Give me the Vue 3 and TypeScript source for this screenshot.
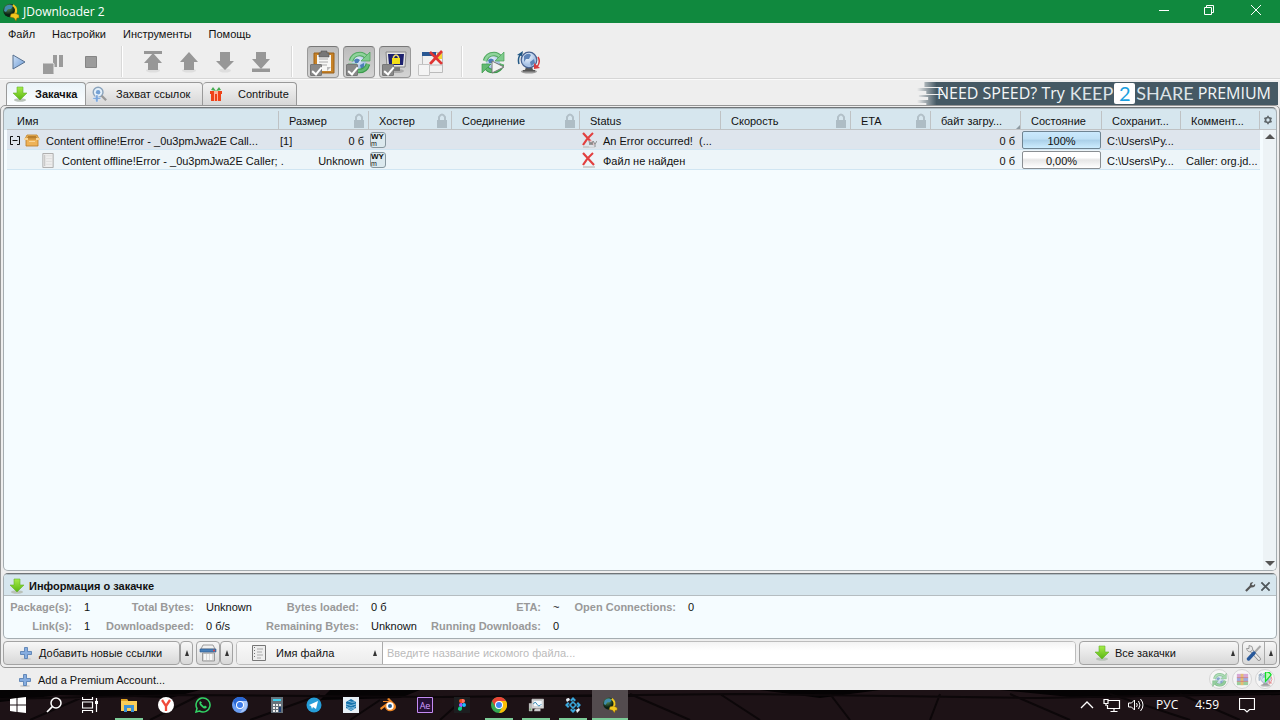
<script setup lang="ts">
import { ref } from 'vue'

interface Column { key: string; title: string; locked?: boolean; sorted?: boolean }
interface Tool { id: string; label: string }

const menus = ['Файл', 'Настройки', 'Инструменты', 'Помощь']

const playback: Tool[] = [
  { id: 'play', label: 'Старт' },
  { id: 'pause', label: 'Пауза' },
  { id: 'stop', label: 'Стоп' },
]
const moves: Tool[] = [
  { id: 'top', label: 'В начало' },
  { id: 'up', label: 'Выше' },
  { id: 'down', label: 'Ниже' },
  { id: 'bottom', label: 'В конец' },
]
const toggles = ref([
  { id: 'clipboard', label: 'Буфер обмена', on: true },
  { id: 'reconnect', label: 'Переподключение', on: true },
  { id: 'premium', label: 'Премиум', on: true },
  { id: 'window-x', label: 'Тихий режим', on: false },
])
const actions: Tool[] = [
  { id: 'reconnect-play', label: 'Переподключить' },
  { id: 'update', label: 'Обновить' },
]
const tabs = [
  { id: 'green-arrow', title: 'Закачка' },
  { id: 'linkgrabber', title: 'Захват ссылок' },
  { id: 'gift', title: 'Contribute' },
]
const activeTab = ref(0)

const columns: Column[] = [
  { key: 'name', title: 'Имя' },
  { key: 'size', title: 'Размер', locked: true },
  { key: 'host', title: 'Хостер', locked: true },
  { key: 'conn', title: 'Соединение', locked: true },
  { key: 'status', title: 'Status' },
  { key: 'speed', title: 'Скорость', locked: true },
  { key: 'eta', title: 'ETA', locked: true },
  { key: 'bytes', title: 'байт загру...', sorted: true },
  { key: 'state', title: 'Состояние' },
  { key: 'saved', title: 'Сохранит...' },
  { key: 'comment', title: 'Коммент...' },
]
const rows = [
  { pack: true, name: 'Content offline!Error - _0u3pmJwa2E Call...', count: '[1]', size: '0 б', icon: 'error-wy', status: 'An Error occurred!  (...', bytes: '0 б', percent: 100, state: '100%', saved: 'C:\\Users\\Ру...', comment: '' },
  { pack: false, name: 'Content offline!Error - _0u3pmJwa2E Caller; .', count: '', size: 'Unknown', icon: 'error', status: 'Файл не найден', bytes: '0 б', percent: 0, state: '0,00%', saved: 'C:\\Users\\Ру...', comment: 'Caller: org.jd...' },
]
const stats = [
  [['Package(s):', '1'], ['Total Bytes:', 'Unknown'], ['Bytes loaded:', '0 б'], ['ETA:', '~'], ['Open Connections:', '0']],
  [['Link(s):', '1'], ['Downloadspeed:', '0 б/s'], ['Remaining Bytes:', 'Unknown'], ['Running Downloads:', '0']],
]
const query = ref('')
const apps = [
  { id: 'explorer', label: 'Проводник', open: true },
  { id: 'yandex', label: 'Yandex' },
  { id: 'whatsapp', label: 'WhatsApp' },
  { id: 'chromium', label: 'Chromium' },
  { id: 'calc', label: 'Калькулятор' },
  { id: 'telegram', label: 'Telegram' },
  { id: 'sketchup', label: 'SketchUp' },
  { id: 'blender', label: 'Blender' },
  { id: 'ae', label: 'After Effects' },
  { id: 'figma', label: 'Figma' },
  { id: 'chrome', label: 'Chrome', open: true },
  { id: 'monitor', label: 'Монитор', open: true },
  { id: 'kodi', label: 'Сервис', open: true },
  { id: 'jd', label: 'JDownloader', open: true, active: true },
]
</script>

<template>
  <div class="desktop">
    <svg class="defs" aria-hidden="true">
      <defs>
        <linearGradient id="g-green" x2="0" y2="1"><stop stop-color="#a6ec4a" /><stop offset="1" stop-color="#58b512" /></linearGradient>
        <linearGradient id="g-blue" x2="1" y2="1"><stop stop-color="#cfe1f7" /><stop offset="1" stop-color="#6a99d4" /></linearGradient>
        <radialGradient id="g-globe" cx=".4" cy=".3"><stop stop-color="#f4f9ff" /><stop offset="1" stop-color="#a9c3e6" /></radialGradient>
        <radialGradient id="g-jd" cx=".35" cy=".3"><stop stop-color="#5d9c5f" /><stop offset="1" stop-color="#0b2114" /></radialGradient>
      </defs>
      <symbol id="jd" viewBox="0 0 18 18">
        <circle cx="8" cy="7.5" r="6.8" fill="url(#g-jd)" />
        <path d="M3 4q4-4 8-1l-2 3-3 0-2 3-2-1z" fill="#3f8cab" />
        <path d="M11 2q5 4 2 9" fill="none" stroke="#f2c71d" stroke-width="2.200" />
        <path d="M9 11l4-1 4 2 0 3-2 0-1 3-2-3-4-1z" fill="#f2c71d" stroke="#805d08" stroke-width=".5" />
      </symbol>
      <symbol id="play" viewBox="0 0 24 24"><path d="M6 5v14l12-7z" fill="url(#g-blue)" stroke="#57708f" stroke-width="1" /></symbol>
      <symbol id="pause" viewBox="0 0 24 24" fill="#9b9b9b"><path d="M10 5h4v12h-4zM16 5h4v12h-4z" /><rect x="-1" y="13" width="12" height="12" rx="1.500" stroke="#eee" /></symbol>
      <symbol id="stop" viewBox="0 0 24 24"><path d="M6.500 6.500h11v11h-11z" fill="#9b9b9b" stroke="#858585" /></symbol>
      <symbol id="up" viewBox="0 0 24 24"><ellipse cx="12" cy="20.500" rx="7" ry="2" fill="#dedede" /><path d="M12 2l9 10h-4v8H7v-8H3z" fill="#979797" /></symbol>
      <symbol id="down" viewBox="0 0 24 24"><ellipse cx="12" cy="20.500" rx="6" ry="2" fill="#dedede" /><path d="M12 20l9-9h-4V2H7v9H3z" fill="#979797" /></symbol>
      <symbol id="top" viewBox="0 0 24 24"><ellipse cx="12" cy="20.500" rx="7" ry="2" fill="#dedede" /><path d="M3 1h18v3H3zM12 3l9 10h-4v7H7v-7H3z" fill="#979797" /></symbol>
      <symbol id="bottom" viewBox="0 0 24 24"><path d="M12 19l9-10h-4V2H7v7H3zM3 18.500h18v3.500H3z" fill="#979797" /></symbol>
      <symbol id="clipboard" viewBox="0 0 24 24">
        <path d="M3 3h20v20H3z" fill="#c78227" stroke="#99601a" /><path d="M6 5h14v16H6z" fill="#f7f7f5" />
        <path d="M8 9h9M8 12h9M8 15h8" stroke="#aaa" /><path d="M8 3h2V1h6v2h2v4H8z" fill="#777" stroke="#555" stroke-width=".6" /><path d="M16 21v-4h4z" fill="#bbb" />
      </symbol>
      <symbol id="reconnect" viewBox="0 0 24 24">
        <circle cx="12" cy="13" r="7" fill="url(#g-globe)" /><path d="M7 10q3-3 6 0l-2 3-3 0zM13 15l4-2 0 4-3 2z" fill="#4c7db9" />
        <path d="M4 11Q6 4 13 4q4 0 7 4" fill="none" stroke="#52a861" stroke-width="4.600" /><path d="M4 11Q6 4 13 4q4 0 7 4" fill="none" stroke="#8ed39b" stroke-width="2.600" />
        <path d="M23 2v9h-9z" fill="#7ecb8c" stroke="#4aa058" stroke-width=".7" />
        <path d="M21 14q-2 7-9 7-5 0-7-4" fill="none" stroke="#3c9a4c" stroke-width="4.600" /><path d="M21 14q-2 7-9 7-5 0-7-4" fill="none" stroke="#62ba72" stroke-width="2.600" />
        <path d="M1 23v-9h9z" fill="#62ba72" stroke="#3c9a4c" stroke-width=".7" />
      </symbol>
      <symbol id="reconnect-play" viewBox="0 0 24 24"><use href="#reconnect" width="24" height="24" /><path d="M11 11v12l12-6z" fill="#f2f2f2" stroke="#777" /></symbol>
      <symbol id="premium" viewBox="0 0 24 24">
        <ellipse cx="14" cy="21" rx="7" ry="2" fill="#aaa" /><path d="M10 17h7v4h-7z" fill="#777" /><path d="M3 2h20l-1 15H4z" fill="#e4e4e4" stroke="#888" /><path d="M5 4h16l-1 11H6z" fill="#1d216e" />
        <path d="M10.500 9V7q2.500-4 5 0v2" fill="none" stroke="#ead96a" stroke-width="1.500" /><rect x="9" y="8" width="8" height="6" fill="#f4df1a" />
      </symbol>
      <symbol id="window-x" viewBox="0 0 24 24">
        <path d="M3.500 2.500h20v20h-20z" fill="#f1f1f1" stroke="#bbb" /><path d="M3 2h14v4H3z" fill="#2a5893" /><path d="M18 3h5v6h-4z" fill="#f4d435" />
        <path d="M11 2l12 12M23 1L11 14" stroke="#e03533" stroke-width="2.600" /><path d="M4 15h19" stroke="#bbb" />
      </symbol>
      <symbol id="update" viewBox="0 0 24 24">
        <ellipse cx="12" cy="21.500" rx="8" ry="2" fill="#999" /><path d="M9 17h6l1 3h2v1.500H6V20h2z" fill="#555" />
        <circle cx="12" cy="10" r="7.800" fill="url(#g-globe)" stroke="#47618f" stroke-width="1.200" />
        <path d="M7 6q4-4 7-1l-2 4-3 0-2 3zM13 12l4-3 1 4-4 3z" fill="#5d84b8" />
        <path d="M5 3Q0 7 2 14" fill="none" stroke="#225885" stroke-width="1.500" /><path d="M0 5l6-4-1 5z" fill="#225885" />
        <path d="M21 7q3 5-1 10" fill="none" stroke="#d83c40" stroke-width="1.500" /><path d="M17 13v6l6-1z" fill="#d83c40" />
      </symbol>
      <symbol id="green-arrow" viewBox="0 0 16 16"><ellipse cx="8" cy="14" rx="6" ry="1.700" fill="#b9c2b9" /><path d="M5 1h6v6h4l-7 7-7-7h4z" fill="url(#g-green)" stroke="#63b32b" stroke-width=".6" /></symbol>
      <symbol id="linkgrabber" viewBox="0 0 18 18">
        <circle cx="8" cy="7" r="5.500" fill="#e4f0fa" stroke="#8ba4bd" stroke-width="1.600" /><circle cx="8" cy="7" r="2.500" fill="#75a1d4" />
        <path d="M12 11l5 5" stroke="#999" stroke-width="2.600" /><path d="M5 10h3v3h3v2H8v3H5v-3H2v-2h3z" fill="#7aa6dd" stroke="#fff" stroke-width=".5" />
      </symbol>
      <symbol id="gift" viewBox="0 0 16 16"><path d="M2 5h12v3H2zM3 8h10v7H3z" fill="#ee4218" /><path d="M6 5h4v10H6z" fill="#ffb09a" /><path d="M7 8h2v7H7z" fill="#ee4218" /><path d="M8 5L3 4l2-3zM8 5l5-1-2-3z" fill="#45aa50" /></symbol>
      <symbol id="lock" viewBox="0 0 12 16"><path d="M3 7V4q3-5 6 0v3" fill="none" stroke="#b2c0c8" stroke-width="2" /><path d="M1 7h10v8H1z" fill="#aebdc5" /></symbol>
      <symbol id="gear" viewBox="0 0 12 12"><circle cx="6" cy="6" r="3" fill="none" stroke="#5f676b" stroke-width="2" /><path d="M6 1v2M6 9v2M1.700 3.500l1.700 1M8.600 7.500l1.700 1M1.700 8.500l1.700-1M8.600 4.500l1.700-1" stroke="#5f676b" stroke-width="2" /></symbol>
      <symbol id="box" viewBox="0 0 16 14"><path d="M3 1h10l2 4H1z" fill="#f0ba61" stroke="#bd7d24" stroke-width=".8" /><path d="M4 2h8l1 2H3z" fill="#b97f2c" /><path d="M2 5h12v7H2z" fill="#eeb258" stroke="#b97a24" stroke-width=".8" /><path d="M0 4h4v2H0zM12 4h4v2h-4zM5 7h6v1H5z" fill="#f8d599" /></symbol>
      <symbol id="page" viewBox="0 0 14 16"><path d="M1.500.5h11v15h-11z" fill="#eee" stroke="#aaa" /><path d="M3.500 2v12" stroke="#bbb" /><path d="M5 3h6M5 6h6M5 9h6M5 12h6" stroke="#ddd" /></symbol>
      <symbol id="page-dark" viewBox="0 0 14 16"><path d="M.5.5h13v15H.5z" fill="#eee" stroke="#777" /><path d="M2.500 2v12" stroke="#777" stroke-dasharray="1 2" /><path d="M5 4h6M5 7h5M5 10h6M5 13h4" stroke="#aaa" /></symbol>
      <symbol id="error" viewBox="0 0 16 16"><path d="M2 15h12" stroke="#c3c3c3" stroke-width="1.500" /><path d="M2 1l11 12M12 1Q6 6 2 13" fill="none" stroke="#e24040" stroke-width="2.200" /></symbol>
      <symbol id="error-wy" viewBox="0 0 16 16"><use href="#error" width="16" height="16" /><rect x="8" y="8.500" width="8" height="7" rx="1" fill="#dde4ea" opacity=".8" /><path d="M8 9l1 4 1-3 1 3 1-4M12 9l2 3 2-3M14 12v3" fill="none" stroke="#777" stroke-width=".8" /></symbol>
      <symbol id="plus" viewBox="0 0 14 14"><ellipse cx="7" cy="13" rx="5" ry="1" fill="#ccc" /><path d="M5.500 1.500h3v4h4v3h-4v4h-3v-4h-4v-3h4z" fill="#86ade0" stroke="#4f78ae" stroke-width=".8" /></symbol>
      <symbol id="tray" viewBox="0 0 18 18"><path d="M3.500 9h12v8h-12z" fill="#d9d9d9" stroke="#999" /><path d="M4 1h10l2 4H2z" fill="#f1f1f1" stroke="#888" stroke-width=".8" /><path d="M1 5h16v3H1z" fill="#477fb9" stroke="#28568b" stroke-width=".6" /><path d="M6 10v6M9 10v6M12 10v6" stroke="#fff" stroke-width="1.500" /><circle cx="15" cy="6.500" r="1" fill="#e34242" /></symbol>
      <symbol id="tri" viewBox="0 0 6 6"><path d="M3 0l2 6H1z" fill="#333" /></symbol>
      <symbol id="wrench" viewBox="0 0 12 12"><path d="M1 11l6-6" stroke="#555" stroke-width="2.400" /><path d="M11 3q1 4-4 4-3-1-1-5l3-1-2 3 2 1z" fill="#555" /></symbol>
      <symbol id="close" viewBox="0 0 12 12"><path d="M1.500 1.500l9 9M10.500 1.500l-9 9" stroke="#4f575b" stroke-width="2" /></symbol>
      <symbol id="tools" viewBox="0 0 16 16"><path d="M4 4l9 10" stroke="#8c8c8c" stroke-width="3.600" stroke-linecap="round" /><path d="M4 4l9 10" stroke="#ececec" stroke-width="2" stroke-linecap="round" /><path d="M3 .5l0 3-2.500 0q1 4 4.500 3 3-2 1-5z" fill="#e8e8e8" stroke="#8c8c8c" stroke-width=".8" /><path d="M14.500 1L8 8" stroke="#aaa" stroke-width="2" /><path d="M8 8l-5.500 6" stroke="#28599b" stroke-width="3.400" stroke-linecap="round" /></symbol>
      <symbol id="rar" viewBox="0 0 16 16"><path d="M2 2h12v4H2z" fill="#c77fc6" /><path d="M2 6h12v4H2z" fill="#7186d8" /><path d="M2 10h12v4H2z" fill="#6fb970" /><path d="M6 2h3v12H6z" fill="#dda02f" /><path d="M2 6h12M2 10h12" stroke="#b33" stroke-width=".8" /></symbol>
      <symbol id="update-v" viewBox="0 0 16 16"><g opacity=".55"><use href="#update" width="16" height="16" /></g><path d="M8 0q4-1 6 3L8 10z" fill="#b9fbb4" stroke="#12dd27" stroke-width="1.300" /></symbol>
      <symbol id="win" viewBox="0 0 16 16"><path d="M0 2l6.500-1v6.500H0zM7.500.9L16 0v7.500H7.500zM0 8.500h6.500V15L0 14zM7.500 8.500H16V16l-8.500-1z" fill="#fff" /></symbol>
      <symbol id="search" viewBox="0 0 16 16"><circle cx="10" cy="6" r="5" fill="none" stroke="#fff" stroke-width="1.500" /><path d="M6.300 9.700L1 15" stroke="#fff" stroke-width="1.700" /></symbol>
      <symbol id="taskview" viewBox="0 0 16 16"><path d="M.5 0v2.500h10V0M.5 16v-2.500h10V16M.5 5h10v6H.5zM14.500 1v14" fill="none" stroke="#fff" stroke-width="1.200" /><path d="M13 4h3v3h-3z" fill="#fff" /></symbol>
      <symbol id="explorer" viewBox="0 0 16 16"><path d="M0 2h6l1 2h9v10H0z" fill="#f9ce58" /><path d="M0 2h6l1 2H0z" fill="#dda020" /><path d="M3 15V8h10v7h-3v-4H6v4z" fill="#3c92d5" /></symbol>
      <symbol id="yandex" viewBox="0 0 16 16"><circle cx="8" cy="8" r="8" fill="#fff" /><path d="M4 3l4 6v5M12 3L8 9" fill="none" stroke="#f04a3b" stroke-width="2.300" /></symbol>
      <symbol id="whatsapp" viewBox="0 0 16 16"><path d="M1 15l1-3.500A7 7 0 1 1 4.500 14z" fill="none" stroke="#32d466" stroke-width="1.500" /><path d="M5 4q-2 3 2 6 3 3 5 0l-2-1.500-1 1-3-3 1-1z" fill="#32d466" /></symbol>
      <symbol id="chromium" viewBox="0 0 16 16"><circle cx="8" cy="8" r="8" fill="#6a9df2" /><path d="M8 4h7a8 8 0 0 0-14 0l3 6z" fill="#2966d3" /><path d="M15 4H8l4 6-4 6q9-2 7-12z" fill="#a5c4f8" /><circle cx="8" cy="8" r="4" fill="#fff" /><circle cx="8" cy="8" r="3" fill="#3c7bea" /></symbol>
      <symbol id="calc" viewBox="0 0 16 16"><path d="M2 0h12v16H2z" fill="#66717a" /><path d="M4 2h8v2H4z" fill="#3ed0ee" /><path d="M4 7h2v2H4zM7 7h2v2H7zM10 7h2v2h-2zM4 10h2v2H4zM7 10h2v2H7zM4 13h2v2H4zM7 13h2v2H7z" fill="#eee" /><path d="M10 10h2v5h-2z" fill="#1d3e75" /></symbol>
      <symbol id="telegram" viewBox="0 0 16 16"><circle cx="8" cy="8" r="7.500" fill="#269dd8" /><path d="M3 8l9-4-2 8-3-2-1 2-1-3z" fill="#fff" /></symbol>
      <symbol id="sketchup" viewBox="0 0 16 16"><path d="M0 0h16v16H0z" fill="#e7f0f6" /><path d="M3 5l5-3 5 3v6l-5 3-5-3z" fill="#1674ae" /><path d="M3 7q5 3 10 0M3 9q5 4 10 0M4 11q4 3 8 0M5 4q4 2 7 1" fill="none" stroke="#8ec5e3" stroke-width=".9" /></symbol>
      <symbol id="blender" viewBox="0 0 16 16"><path d="M0 11l8-6H3V4h6L7 2l2-1 6 6q3 5-3 7-6 1-7-4l-4 3z" fill="#ed8625" /><circle cx="10" cy="9" r="3.700" fill="#fff" /><circle cx="10" cy="9" r="2" fill="#245b91" /></symbol>
      <symbol id="ae" viewBox="0 0 16 16"><path d="M.5.5h15v15H.5z" fill="#251036" stroke="#c58bf3" /><text x="8" y="11.500" text-anchor="middle" font-family="Open Sans, sans-serif" font-size="9" fill="#d39eff">Ae</text></symbol>
      <symbol id="figma" viewBox="0 0 16 16"><path d="M0 0h16v16H0z" fill="#1d1e20" /><path d="M8 2H7a2 2 0 0 0 0 4h1z" fill="#f24e1e" /><path d="M8 2h1a2 2 0 0 1 0 4H8z" fill="#ff7262" /><path d="M8 6H7a2 2 0 0 0 0 4h1z" fill="#a259ff" /><circle cx="10" cy="8" r="2" fill="#1abcfe" /><path d="M8 10H7a2 2 0 1 0 1 2z" fill="#0acf83" /></symbol>
      <symbol id="chrome" viewBox="0 0 16 16"><circle cx="8" cy="8" r="8" fill="#35a853" /><path d="M8 4h7a8 8 0 0 0-14 0l3.500 6z" fill="#e94435" /><path d="M15 4H8l3.500 6L8 16A8 8 0 0 0 15 4z" fill="#fbbd05" /><circle cx="8" cy="8" r="4" fill="#fff" /><circle cx="8" cy="8" r="3" fill="#4285f4" /></symbol>
      <symbol id="monitor" viewBox="0 0 18 16"><path d="M1 6h4v9H1z" fill="#bbb" /><path d="M2 12h1v2H2z" fill="#3ac240" /><path d="M4.500 1.500h13v10h-13z" fill="#eee" stroke="#bbb" /><path d="M6 3h10v7H6z" fill="#f4fbff" stroke="#999" stroke-width=".5" /><path d="M6 7q2-4 4 0t5 0" fill="none" stroke="#2a7fac" /><path d="M9 12h5v3H7v-2z" fill="#ccc" /></symbol>
      <symbol id="kodi" viewBox="0 0 16 16"><path d="M8 0l3 3-1.500 1.500L8 3 6.500 4.500 5 3zM16 8l-3 3-1.500-1.500L13 8l-1.500-1.500L13 5zM8 16l-3-3 1.500-1.500L8 13l1.500-1.500L11 13zM0 8l3-3 1.500 1.500L3 8l1.500 1.500L3 11z" fill="#3aa6da" /><path d="M8 5l3 3-3 3-3-3z" fill="none" stroke="#3aa6da" stroke-width="1.600" /><path d="M1 3q0-2 3-2l1 2-3 2zM11 13l3-2 1 2-3 3z" fill="#e7eef5" /></symbol>
      <symbol id="chevron" viewBox="0 0 14 14"><path d="M1 10l6-6 6 6" fill="none" stroke="#fff" stroke-width="1.300" /></symbol>
      <symbol id="network" viewBox="0 0 17 14"><path d="M5 2.500h11v8H4V7M.5 1.500h4v4h-4zM2.500 5v3M7 13.500h7M10.500 10v3" fill="none" stroke="#fff" stroke-width="1.200" /></symbol>
      <symbol id="sound" viewBox="0 0 17 14"><path d="M1 5h3l3-3v10L4 9H1z" fill="none" stroke="#fff" /><path d="M9 5q1.500 2 0 4M11 3q3 4 0 8M13 1q5 6 0 12" fill="none" stroke="#fff" /></symbol>
      <symbol id="notice" viewBox="0 0 16 16"><path d="M.5 1.500h15v11h-5l-2.500 2.500-2.500-2.500h-5z" fill="none" stroke="#fff" stroke-width="1.200" /></symbol>
    </svg>

    <header class="titlebar">
      <svg class="i18"><use href="#jd" /></svg>
      <h1>JDownloader 2</h1>
      <div class="winbtns">
        <button type="button" aria-label="Свернуть"><svg viewBox="0 0 12 12"><path d="M1 6.500h10" /></svg></button>
        <button type="button" aria-label="Развернуть"><svg viewBox="0 0 12 12"><path d="M1.500 3.500h7v7h-7zM3.500 3V1.500h7v7H9" /></svg></button>
        <button type="button" aria-label="Закрыть"><svg viewBox="0 0 12 12"><path d="M1 1l10 10M11 1L1 11" /></svg></button>
      </div>
    </header>

    <nav class="menu"><button v-for="m in menus" :key="m" type="button">{{ m }}</button></nav>

    <div class="toolbar">
      <button v-for="t in playback" :key="t.id" type="button" class="tool" :aria-label="t.label"><svg class="i24"><use :href="'#' + t.id" /></svg></button>
      <span class="sep" />
      <button v-for="t in moves" :key="t.id" type="button" class="tool" :aria-label="t.label"><svg class="i24"><use :href="'#' + t.id" /></svg></button>
      <span class="sep" />
      <label v-for="t in toggles" :key="t.id" class="tool toggle" :class="{ on: t.on }">
        <svg class="i24"><use :href="'#' + t.id" /></svg>
        <input v-model="t.on" type="checkbox" :aria-label="t.label">
      </label>
      <span class="sep" />
      <button v-for="t in actions" :key="t.id" type="button" class="tool" :aria-label="t.label"><svg class="i24"><use :href="'#' + t.id" /></svg></button>
    </div>

    <div class="tabrow">
      <div class="tabs" role="tablist">
        <button v-for="(t, i) in tabs" :key="t.id" type="button" role="tab" class="tab" :class="{ active: i === activeTab }" :aria-selected="i === activeTab" @click="activeTab = i">
          <svg class="i16"><use :href="'#' + t.id" /></svg><span>{{ t.title }}</span>
        </button>
      </div>
      <a class="banner" href="#premium">
        <svg class="streaks" viewBox="0 0 28 23" preserveAspectRatio="none" aria-hidden="true">
          <defs><linearGradient id="fade"><stop stop-color="#455964" stop-opacity="0" /><stop offset=".75" stop-color="#455964" /></linearGradient></defs>
          <path d="M8 0h20v5H8zM0 6h28v3H0zM10 8h18v4H10zM2 13h26v2H2zM12 15h16v3H12zM0 18h28v3H0zM10 21h18v2H10z" fill="url(#fade)" />
        </svg>
        <span class="pitch">NEED SPEED? Try</span><span class="brand">KEEP</span><span class="two">2</span><span class="brand">SHARE</span><span class="prem">PREMIUM</span>
      </a>
    </div>

    <main class="frame">
      <section class="panel list">
        <table>
          <colgroup><col v-for="c in columns" :key="c.key" :class="'c-' + c.key"></colgroup>
          <thead>
            <tr>
              <th v-for="c in columns" :key="c.key" scope="col">
                <div class="th"><span>{{ c.title }}</span><svg v-if="c.locked" class="lock"><use href="#lock" /></svg><i v-if="c.sorted" class="corner" /></div>
              </th>
            </tr>
          </thead>
          <tbody>
            <tr v-for="r in rows" :key="r.name" :class="{ pack: r.pack }">
              <td class="spill">
                <div class="cell name" :class="{ child: !r.pack }">
                  <button v-if="r.pack" type="button" class="fold" aria-label="Свернуть пакет"><svg viewBox="0 0 10 9"><path d="M3 .5H.5v8H3M7 .5h2.500v8H7M2.500 4.500h5" /></svg></button>
                  <svg :class="r.pack ? 'box' : 'page'"><use :href="r.pack ? '#box' : '#page'" /></svg><span>{{ r.name }}</span>
                </div>
              </td>
              <td class="spill"><div class="cell size"><span>{{ r.count }}</span><span>{{ r.size }}</span></div></td>
              <td><div class="cell host"><span class="wy"><b>WY</b><small>m</small></span></div></td>
              <td />
              <td><div class="cell status"><svg class="i16"><use :href="'#' + r.icon" /></svg><span>{{ r.status }}</span></div></td>
              <td /><td />
              <td><div class="cell bytes">{{ r.bytes }}</div></td>
              <td><div class="progress" :class="{ full: r.percent === 100 }" role="progressbar" :aria-valuenow="r.percent">{{ r.state }}</div></td>
              <td><div class="cell text">{{ r.saved }}</div></td>
              <td><div class="cell text">{{ r.comment }}</div></td>
            </tr>
          </tbody>
        </table>
        <div class="side">
          <button type="button" class="cfg" aria-label="Настроить столбцы"><svg><use href="#gear" /></svg></button>
          <div class="scroll">
            <button type="button" aria-label="Вверх"><i class="arr-up" /></button>
            <button type="button" aria-label="Вниз"><i class="arr-down" /></button>
          </div>
        </div>
      </section>

      <section class="panel info">
        <header>
          <svg class="i16"><use href="#green-arrow" /></svg><h2>Информация о закачке</h2>
          <button type="button" aria-label="Настроить"><svg><use href="#wrench" /></svg></button>
          <button type="button" aria-label="Закрыть панель"><svg><use href="#close" /></svg></button>
        </header>
        <dl>
          <template v-for="(line, i) in stats" :key="i">
            <template v-for="s in line" :key="s[0]"><dt :class="{ first: s === line[0] }">{{ s[0] }}</dt><dd>{{ s[1] }}</dd></template>
          </template>
        </dl>
      </section>

      <div class="bottombar">
        <div class="split add">
          <button type="button" class="main"><svg class="i14"><use href="#plus" /></svg>Добавить новые ссылки</button>
          <button type="button" class="drop" aria-label="Ещё"><svg class="tri"><use href="#tri" /></svg></button>
        </div>
        <div class="split">
          <button type="button" class="sq" aria-label="Очистить"><svg class="i18"><use href="#tray" /></svg></button>
          <button type="button" class="drop" aria-label="Варианты очистки"><svg class="tri"><use href="#tri" /></svg></button>
        </div>
        <div class="search">
          <label class="pick field"><svg class="page-dark"><use href="#page-dark" /></svg><select aria-label="Поле поиска"><option>Имя файла</option></select><svg class="tri"><use href="#tri" /></svg></label>
          <input v-model="query" type="text" aria-label="Поиск" placeholder="Введите название искомого файла...">
        </div>
        <label class="pick filter"><svg class="i16"><use href="#green-arrow" /></svg><select aria-label="Фильтр закачек"><option>Все закачки</option></select><svg class="tri"><use href="#tri" /></svg></label>
        <div class="split joined">
          <button type="button" class="sq" aria-label="Инструменты"><svg class="i16"><use href="#tools" /></svg></button>
          <button type="button" class="drop" aria-label="Ещё инструменты"><svg class="tri"><use href="#tri" /></svg></button>
        </div>
      </div>
    </main>

    <footer class="statusbar">
      <button type="button" class="account"><svg class="i14"><use href="#plus" /></svg>Add a Premium Account...</button>
      <span class="round"><svg class="faded"><use href="#reconnect" /></svg></span>
      <span class="round"><svg class="faded"><use href="#rar" /></svg></span>
      <span class="round"><svg><use href="#update-v" /></svg></span>
    </footer>

    <nav class="taskbar">
      <svg class="wall" viewBox="0 0 1280 30" preserveAspectRatio="none" aria-hidden="true">
        <path d="M0 0h200l-30 8L60 5 0 12zM330 0h90l-20 8-80 2zM760 0h120l-60 8zM1000 0h280v5l-200 3z" fill="#050304" />
        <path d="M0 9l180-4 260 2 300-3 300 4 240-5M30 30L90 4M150 30l50-25M250 30l70-25M350 30l30-20M440 30l20-18M630 4l60 26M720 4l40 26M830 4l20 26M930 30l10-26M1010 4l60 26M1110 4l80 26M1180 4l60 26" fill="none" stroke="#0c0709" stroke-width="2" />
      </svg>
      <button type="button" class="sys" aria-label="Пуск"><svg class="i16"><use href="#win" /></svg></button>
      <button type="button" class="sys" aria-label="Поиск Windows"><svg class="i16"><use href="#search" /></svg></button>
      <button type="button" class="sys last" aria-label="Представление задач"><svg class="i16"><use href="#taskview" /></svg></button>
      <button v-for="a in apps" :key="a.id" type="button" class="app" :class="{ open: a.open, active: a.active }" :aria-label="a.label"><svg class="i16"><use :href="'#' + a.id" /></svg></button>
      <div class="systray">
        <svg class="i14"><use href="#chevron" /></svg>
        <svg class="i18w"><use href="#network" /></svg>
        <svg class="i18w"><use href="#sound" /></svg>
        <span class="lang">РУС</span><time>4:59</time>
        <svg class="notice"><use href="#notice" /></svg>
      </div>
    </nav>
  </div>
</template>

<style>
html, body { background: #eee; }
</style>

<style scoped>
.desktop { min-height: 100vh; display: flex; flex-direction: column; background: #eee; font: 11px/14px "Liberation Sans", Arial, sans-serif; color: #111; overflow: hidden; }
* { box-sizing: border-box; }
button, input, select { font: inherit; color: inherit; margin: 0; padding: 0; border: 0; background: none; }
svg { display: block; flex: none; overflow: visible; }
.defs { position: absolute; width: 0; height: 0; }
.i14 { width: 14px; height: 14px; } .i16 { width: 16px; height: 16px; } .i18 { width: 18px; height: 18px; } .i24 { width: 24px; height: 24px; } .i18w { width: 18px; height: 14px; }
.tri { width: 6px; height: 6px; }

.titlebar { height: 23px; background: #10893e; color: #fff; display: flex; align-items: center; padding-left: 2px; gap: 3px; }
.titlebar h1 { margin: 0; font: 12px/18px "Open Sans", sans-serif; }
.winbtns { margin-left: auto; display: flex; height: 20px; align-self: flex-start; }
.winbtns button { width: 46px; display: flex; align-items: center; justify-content: center; }
.winbtns button:nth-child(2) { width: 44px; }
.winbtns button:last-child { width: 49px; }
.winbtns svg { width: 12px; height: 12px; fill: none; stroke: #fff; }

.menu { height: 22px; display: flex; align-items: center; gap: 17px; padding-left: 8px; }
.toolbar { height: 34px; display: flex; align-items: center; gap: 4px; padding: 1px 3px; border-bottom: 1px solid #d6d6d6; box-shadow: 0 1px #fafafa; }
.tool { width: 32px; height: 32px; display: flex; align-items: center; justify-content: center; position: relative; border-radius: 4px; }
.sep { width: 2px; align-self: stretch; margin: 0 10px; background: #d9d9d9; border-right: 1px solid #fff; }
.toggle.on { background: linear-gradient(#bcbcbc, #d4d4d4); border: 1px solid #999; border-top-color: #777; }
.toggle input { appearance: none; position: absolute; left: 3px; bottom: 2px; width: 12px; height: 12px; border: 1px solid #c4c4c4; border-radius: 1px; background: #f4f4f4; }
.toggle.on input { background: #898989; border-color: #777; left: 2px; bottom: 1px; }
.toggle input:checked::after { content: ""; position: absolute; left: 3px; top: 0; width: 4px; height: 8px; border: solid #fff; border-width: 0 2px 2px 0; transform: rotate(40deg); }

.tabrow { height: 26px; display: flex; justify-content: space-between; padding: 3px 2px 0 6px; }
.tabs { display: flex; }
.tab { width: 94px; display: flex; align-items: center; gap: 14px; padding-left: 5px; border: 1px solid #999; border-left-width: 0; border-bottom: 0; border-radius: 4px 4px 0 0; background: linear-gradient(#f3f3f3, #d7d7d7); }
.tab:first-child { width: 80px; gap: 7px; border-left-width: 1px; }
.tab:nth-child(2) { width: 117px; gap: 9px; }
.tab.active { font-weight: bold; background: linear-gradient(#eaf3f8, #fcfeff); }
.banner { display: flex; align-items: center; background: linear-gradient(90deg, transparent 26px, #455964 26px); color: #f4f7f8; text-decoration: none; font: 16px/23px "Open Sans", sans-serif; padding-right: 7px; position: relative; padding-left: 20px; }
.streaks { position: absolute; left: 0; top: 0; width: 26px; height: 100%; }
.pitch { position: relative; margin-right: 5px; }
.brand { font: 18px/23px Lato, sans-serif; color: #dde4e8; }
.two { background: #fff; color: #1a9fe0; font: 20px/21px Lato, sans-serif; width: 21px; text-align: center; border-radius: 2px; margin: 0 1px; }
.prem { margin-left: 4px; }

.frame { flex: 1; display: flex; flex-direction: column; border: 1px solid #969696; border-radius: 5px; padding: 1px 2px 2px; gap: 2px; }
.panel { border: 1px solid #a5adb1; border-top-color: #6f7477; border-radius: 5px; background: #f5fcff; overflow: hidden; }
.list { flex: 1; display: flex; align-items: stretch; background: linear-gradient(#d6e6ee 22px, #f5fcff 22px); box-shadow: inset 0 1px #b1bec5; }
table { flex: 1; width: 0; table-layout: fixed; border-collapse: separate; border-spacing: 0; align-self: flex-start; padding-left: 3px; }
.c-size { width: 90px; } .c-host { width: 83px; } .c-conn { width: 128px; } .c-status { width: 141px; } .c-speed { width: 130px; } .c-eta { width: 80px; } .c-bytes { width: 90px; } .c-state { width: 81px; } .c-saved { width: 79px; } .c-comment { width: 79px; }
th, td { padding: 0; font-weight: normal; text-align: left; overflow: hidden; white-space: pre; }
th { height: 22px; padding-top: 3px; border-bottom: 1px solid #bfc2c4; }
.th { height: 18px; border-right: 1px solid #bfc2c4; padding: 1px 3px 0 10px; display: flex; justify-content: space-between; align-items: center; position: relative; }
.lock { width: 12px; height: 16px; }
.corner { position: absolute; right: 0; bottom: 0; border: solid transparent; border-width: 4px 0 0 4px; border-right: 0; border-bottom: 4px solid #8f9ba2; border-top: 0; }
td { height: 20px; border-bottom: 1px solid #d0e5f2; background: #edf5f9; }
td.spill { overflow: visible; }
td.spill span { position: relative; z-index: 1; }
.pack td { background: #dee5ed; }
.cell { display: flex; align-items: center; height: 19px; padding-top: 2px; }
.name { padding-left: 3px; }
.child { padding-left: 34px; }
.fold { width: 10px; height: 9px; margin-right: 4px; }
.fold svg { width: 10px; height: 9px; fill: none; stroke: #111; }
.box { width: 16px; height: 14px; margin-right: 6px; }
.page { width: 14px; height: 15px; margin-right: 7px; }
.size { justify-content: space-between; padding: 2px 5px 0 1px; }
.host { padding-left: 1px; padding-top: 0; }
.wy { width: 16px; height: 16px; border: 1px solid #87979f; border-radius: 3px; background: #dce9ee; display: flex; flex-direction: column; }
.wy b { font: bold 8px/8px "Liberation Sans", sans-serif; }
.wy small { font: 7px/5px "Liberation Sans", sans-serif; }
.status { gap: 6px; padding-left: 1px; }
.status svg { margin-bottom: 2px; }
.bytes { justify-content: flex-end; padding-right: 6px; }
.text { padding-left: 5px; }
.progress { height: 18px; margin: 0 1px; border: 1px solid #8a8f93; border-radius: 2px; text-align: center; line-height: 18px; background: linear-gradient(#fff, #fff 35%, #e6e6e6 50%, #fff); }
.progress.full { background: linear-gradient(#cbe9fd, #bfe0f5 45%, #a9cfe8 50%, #cdedff); border-color: #6f8492; }
.side { width: 16px; display: flex; flex-direction: column; }
.cfg { height: 22px; border-bottom: 1px solid #bfc2c4; display: flex; align-items: center; justify-content: center; padding-top: 3px; }
.cfg svg { width: 10px; height: 10px; }
.scroll { flex: 1; background: #edf3f6; margin-left: 3px; display: flex; flex-direction: column; justify-content: space-between; }
.scroll button { height: 13px; display: flex; align-items: center; justify-content: center; }
.arr-up { border: 5px solid transparent; border-top: 0; border-bottom-color: #555; }
.arr-down { border: 5px solid transparent; border-bottom: 0; border-top-color: #555; }

.info header { height: 22px; background: #d6e6ee; border-bottom: 1px solid #b5bdc1; display: flex; align-items: center; padding: 3px 5px 0; gap: 4px; box-shadow: inset 0 1px #b1bec5; }
.info h2 { margin: 0 auto 0 0; font: bold 11px/14px "Liberation Sans", Arial, sans-serif; }
.info header svg:not(.i16) { width: 11px; height: 11px; }
.info dl { margin: 0; padding: 1px 4px 2px; display: grid; grid-template-columns: 64px 32px 90px 48px 117px 52px 130px 23px 112px 1fr; grid-auto-rows: 19px; align-items: center; height: 42px; }
.info dt { font-weight: bold; color: #999; text-align: right; white-space: nowrap; }
.info dt.first { grid-column: 1; }
.info dd { margin: 0; padding-left: 12px; white-space: nowrap; }

.bottombar { display: flex; height: 24px; gap: 3px; }
.split { display: flex; }
.split button, .pick { border: 1px solid #a3a3a3; border-radius: 4px; background: linear-gradient(#f7f7f7, #d8d8d8); display: flex; align-items: center; justify-content: center; }
.split .main { width: 177px; justify-content: flex-start; padding-left: 15px; gap: 6px; }
.split .drop { width: 13px; }
.split .sq { width: 24px; }
.joined { border: 1px solid #a3a3a3; border-radius: 4px; background: linear-gradient(#f7f7f7, #d8d8d8); }
.split.joined button { border: 0; background: none; }
.split.joined .sq { width: 22px; border-right: 1px solid #aaa; border-radius: 0; }
.split.joined .drop { width: 11px; }
.search { flex: 1; display: flex; border: 1px solid #bcbcbc; border-radius: 4px; background: #fff; overflow: hidden; }
.field { border: 0; border-right: 1px solid #aaa; border-radius: 0; width: 146px; padding: 0 4px 0 15px; gap: 10px; background: linear-gradient(#f9f9f9, #ececec); }
.page-dark { width: 14px; height: 16px; }
.pick select { appearance: none; flex: 1; min-width: 0; height: 16px; outline: 0; }
.search input { flex: 1; padding: 0 4px; background: linear-gradient(#f3f3f3, #fff 40%); outline: 0; }
.search input::placeholder { color: #bbb; opacity: 1; }
.filter { width: 160px; padding: 0 2px 0 14px; gap: 5px; }

.statusbar { height: 22px; display: flex; align-items: center; padding: 0 5px 0 18px; gap: 3px; }
.account { display: flex; align-items: center; gap: 6px; margin-right: auto; padding-top: 2px; }
.round { width: 20px; height: 20px; border: 1px solid #d5d5d5; border-radius: 50%; background: #f6f6f6; display: flex; align-items: center; justify-content: center; }
.round svg { width: 15px; height: 15px; }
.faded { opacity: .65; }

.taskbar { height: 30px; background: #1d1216; display: flex; position: relative; font: 12px/16px "Open Sans", sans-serif; color: #fff; }
.taskbar > * { position: relative; }
.taskbar .wall { position: absolute; inset: 0; width: 100%; height: 100%; overflow: hidden; }
.sys, .app { width: 36px; display: flex; align-items: center; justify-content: center; }
.sys.last { margin-right: 3px; }
.app { margin-right: 1px; }
.app.open::after { content: ""; position: absolute; left: 4px; right: 4px; bottom: 0; height: 2px; background: #7ccb97; }
.app.active { background: #534b4e; }
.app.active::after { left: 0; right: 0; }
.systray { margin-left: auto; display: flex; align-items: center; padding-right: 25px; }
.systray .i14 { margin-right: 9px; }
.i18w { margin-right: 6px; }
.lang { margin: 0 17px 0 5px; }
.systray time { margin-right: 20px; }
.notice { width: 16px; height: 16px; }
</style>
